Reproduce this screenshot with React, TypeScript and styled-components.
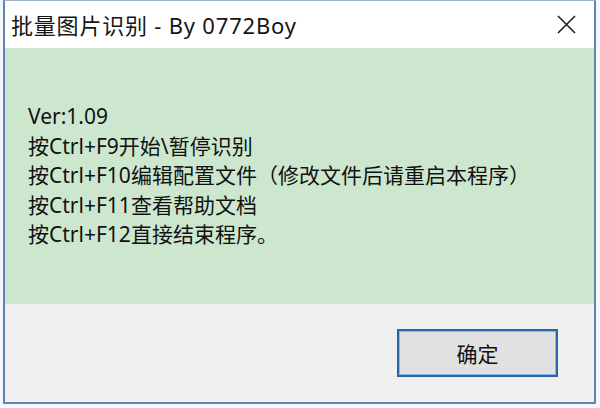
import React from "react";
import styled, { createGlobalStyle } from "styled-components";

const Global = createGlobalStyle`
  html, body { margin: 0; padding: 0; background: #f7fafd; }
  body { font-family: "Noto Sans", "Noto Sans CJK SC", sans-serif; }
`;

const Page = styled.div`
  width: 600px;
  height: 408px;
  box-sizing: border-box;
  padding: 0 4px 4px 3px;
  background: #f4f8fc;
`;

const Window = styled.div`
  height: 100%;
  box-sizing: border-box;
  display: flex;
  flex-direction: column;
  border: 2px solid #5f84b2;
  border-top: 1px solid #9fb4cc;
  background: #f0f0f0;
`;

const TitleBar = styled.div`
  height: 47px;
  flex: none;
  display: flex;
  align-items: center;
  justify-content: space-between;
  background: #ffffff;
  padding: 0 18px 0 6px;
`;

const Title = styled.div`
  font-family: "Noto Sans", "Noto Sans CJK SC", sans-serif;
  font-size: 22px;
  color: #151515;
  letter-spacing: 0.8px;
  line-height: 1;
`;

const CloseButton = styled.div`
  width: 20px;
  height: 20px;
  display: flex;
  align-items: center;
  justify-content: center;
`;

const Content = styled.div`
  height: 256px;
  flex: none;
  box-sizing: border-box;
  background: #cde7cf;
  padding: 54px 0 0 23px;
`;

const Line = styled.div`
  font-family: "Noto Sans", "Noto Sans CJK SC", sans-serif;
  font-size: 21px;
  line-height: 29.6px;
  color: #111;
  white-space: nowrap;
`;

const Footer = styled.div`
  flex: 1;
  display: flex;
  justify-content: flex-end;
  align-items: flex-start;
  padding: 25px 36px 0 0;
`;

const OkButton = styled.button`
  width: 161px;
  height: 48px;
  box-sizing: border-box;
  border: 2px solid #2a64a8;
  box-shadow: inset 0 0 0 1px #8fb8e3;
  background: #e1e1e1;
  font-family: "Noto Sans", "Noto Sans CJK SC", sans-serif;
  font-size: 21px;
  color: #111;
  padding: 0;
  cursor: default;
`;

const lines = [
  "Ver:1.09",
  "按Ctrl+F9开始\\暂停识别",
  "按Ctrl+F10编辑配置文件（修改文件后请重启本程序）",
  "按Ctrl+F11查看帮助文档",
  "按Ctrl+F12直接结束程序。",
];

export default function App() {
  return (
    <>
      <Global />
      <Page>
        <Window>
          <TitleBar>
            <Title>批量图片识别 - By 0772Boy</Title>
            <CloseButton>
              <svg width="19" height="19" viewBox="0 0 19 19">
                <path d="M1 1 L18 18 M18 1 L1 18" stroke="#1e1e1e" strokeWidth="1.6" fill="none" />
              </svg>
            </CloseButton>
          </TitleBar>
          <Content>
            {lines.map((l) => (
              <Line key={l}>{l}</Line>
            ))}
          </Content>
          <Footer>
            <OkButton>确定</OkButton>
          </Footer>
        </Window>
      </Page>
    </>
  );
}
